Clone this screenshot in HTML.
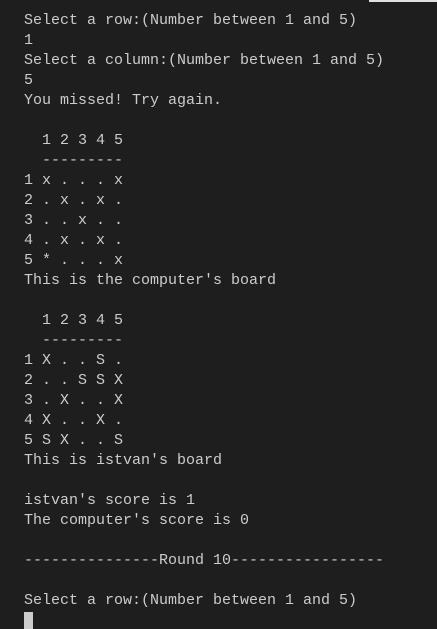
<!DOCTYPE html>
<html><head><meta charset="utf-8"><style>
html,body{margin:0;padding:0;background:#1e1e1e;width:437px;height:629px;overflow:hidden;position:relative}
pre{margin:0;position:absolute;left:24px;top:11px;font-family:"Liberation Mono",monospace;font-size:15px;line-height:20px;color:#cccccc;letter-spacing:0}
.top{position:absolute;left:369px;top:0;width:68px;height:2px;background:#e0e0e0}
.cur{position:absolute;left:24px;top:612px;width:9px;height:17px;background:#cccccc}
</style></head><body>
<div class="top"></div>
<pre>Select a row:(Number between 1 and 5)
1
Select a column:(Number between 1 and 5)
5
You missed! Try again.

  1 2 3 4 5
  ---------
1 x . . . x
2 . x . x .
3 . . x . .
4 . x . x .
5 * . . . x
This is the computer's board

  1 2 3 4 5
  ---------
1 X . . S .
2 . . S S X
3 . X . . X
4 X . . X .
5 S X . . S
This is istvan's board

istvan's score is 1
The computer's score is 0

---------------Round 10-----------------

Select a row:(Number between 1 and 5)</pre>
<div class="cur"></div>
</body></html>
